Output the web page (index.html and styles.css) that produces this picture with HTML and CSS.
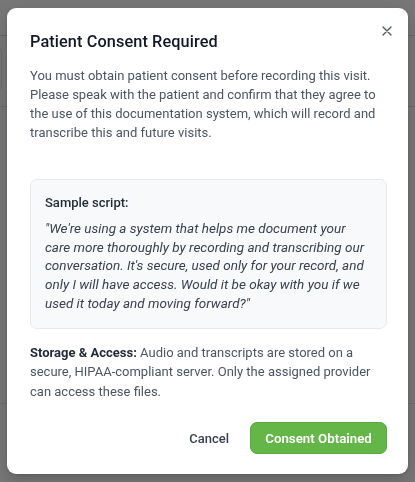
FILE: index.html
```html
<!DOCTYPE html>
<html lang="en">
<head>
<meta charset="utf-8">
<title>Patient Consent Required</title>
<link rel="stylesheet" href="styles.css">
</head>
<body>
<div class="underlay">
  <div class="under-header"></div>
  <div class="under-panel"></div>
  <div class="under-rule"></div>
  <div class="under-spacer"></div>
  <div class="under-rule"></div>
</div>
<div class="overlay">
  <div class="modal" role="dialog" aria-labelledby="consent-title">
    <button class="close" aria-label="Close">
      <svg width="10" height="10" viewBox="0 0 10 10"><path d="M1 1l8 8M9 1l-8 8" stroke="#4b5563" stroke-width="1.3" stroke-linecap="round" fill="none"/></svg>
    </button>
    <h2 class="title" id="consent-title">Patient Consent Required</h2>
    <p class="intro">You must obtain patient consent before recording this visit. Please speak with the patient and confirm that they agree to the use of this documentation system, which will record and transcribe this and future visits.</p>
    <div class="script-box">
      <div class="script-label">Sample script:</div>
      <p class="script-text">"We're using a system that helps me document your care more thoroughly by recording and transcribing our conversation. It's secure, used only for your record, and only I will have access. Would it be okay with you if we used it today and moving forward?"</p>
    </div>
    <p class="storage"><strong>Storage &amp; Access:</strong> Audio and transcripts are stored on a secure, HIPAA-compliant server. Only the assigned provider can access these files.</p>
    <div class="actions">
      <button class="btn-cancel">Cancel</button>
      <button class="btn-confirm">Consent Obtained</button>
    </div>
  </div>
</div>
</body>
</html>
```
FILE: styles.css
```css
* { box-sizing: border-box; }
html, body { margin: 0; height: 100%; }
body {
  background: #777777;
  font-family: Roboto, "Liberation Sans", sans-serif;
  overflow: hidden;
}
.underlay { width: 415px; }
.under-header { height: 36px; border-bottom: 1px solid #676767; }
.under-panel {
  margin: 12px 0 0 -20px;
  width: 22px; height: 42px;
  border: 1px solid #6a6a6a; border-radius: 4px;
}
.under-rule { margin-top: 16px; height: 1px; background: #6b6b6b; width: 415px; }
.under-spacer { height: 280px; }

.overlay {
  position: fixed; inset: 0;
  display: flex; align-items: center; justify-content: center;
}
.modal {
  position: relative;
  width: 401px;
  background: #fff;
  border-radius: 9px;
  padding: 22px 21px 20px 23px;
  box-shadow: 0 6px 16px rgba(0,0,0,0.18), 0 1px 3px rgba(0,0,0,0.12);
}
.close {
  position: absolute; top: 18px; right: 16px;
  width: 10px; height: 10px; padding: 0;
  border: 0; background: none; display: block; cursor: pointer;
}
.close svg { display: block; }
.title {
  margin: 0;
  font-size: 16.3px; font-weight: 500;
  line-height: 24px; color: #111827;
  letter-spacing: 0.1px;
}
.intro {
  margin: 12px 0 0;
  font-size: 13px; line-height: 19px; color: #4b5563;
}
.script-box {
  margin-top: 37px;
  background: #f8f9fb;
  border: 1px solid #e7e9ed;
  border-radius: 7px;
  padding: 13px 14px 15px;
}
.script-label {
  font-size: 13px; line-height: 19px; font-weight: 500; color: #1f2937;
}
.script-text {
  margin: 7px 0 0;
  font-size: 13.5px; line-height: 18.75px; font-style: italic; color: #374151;
}
.storage {
  margin: 14px 0 0;
  font-size: 13px; line-height: 19.5px; color: #4b5563;
}
.storage strong { font-weight: 700; color: #1f2937; }
.actions {
  margin-top: 21px;
  display: flex; justify-content: flex-end; align-items: center; gap: 7px;
}
.btn-cancel {
  height: 32px; padding: 0 14px;
  border: 0; background: none;
  font-family: inherit; font-size: 13px; font-weight: 500; color: #374151;
}
.btn-confirm {
  height: 32px; width: 137px; padding: 0;
  border: 1px solid #5aab3e; border-radius: 7px;
  background: #63b647; color: #fff;
  font-family: inherit; font-size: 13.3px; font-weight: 600;
}
```
